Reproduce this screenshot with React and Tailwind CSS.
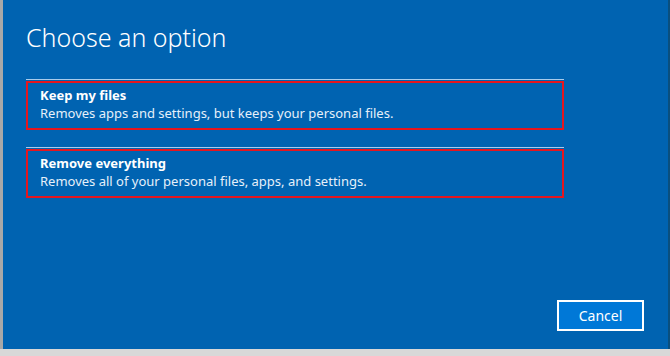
import React from 'react';

const options = [
  { title: 'Keep my files', desc: 'Removes apps and settings, but keeps your personal files.' },
  { title: 'Remove everything', desc: 'Removes all of your personal files, apps, and settings.' },
];

const OptionButton = ({ title, desc }) => (
  <div className="w-[538px] border-t border-[#a9cbeb] pt-px">
    <div className="h-[49px] border-2 border-[#e5161f] pl-[12px] pt-[3px]">
      <p className="text-[13px] font-bold leading-[18px] text-white">{title}</p>
      <p className="text-[13px] leading-[18px] text-[#e6f0fa]">{desc}</p>
    </div>
  </div>
);

const App = () => {
  return (
    <div
      className="w-[670px] h-[356px] flex flex-col overflow-hidden bg-[#9c9c9c]"
      style={{ fontFamily: '"Noto Sans", "Open Sans", sans-serif' }}
    >
      <div className="flex flex-1">
        {/* left edge of desktop behind */}
        <div className="w-[3px] bg-[#a8a8a8]" />

        {/* dialog */}
        <div className="flex-1 bg-[#0063b1] pl-[23px] pr-[24px] flex flex-col">
          <h1 className="mt-[20px] text-[25px] font-light leading-[34px] text-white">Choose an option</h1>

          <div className="mt-[25px] flex flex-col gap-[17px]">
            {options.map((o) => (
              <OptionButton key={o.title} title={o.title} desc={o.desc} />
            ))}
          </div>

          <div className="mt-auto mb-[18px] flex justify-end">
            <button className="w-[87px] h-[31px] border-2 border-white bg-[#0078d7] text-[14px] text-white">
              Cancel
            </button>
          </div>
        </div>

        <div className="w-[2px] bg-[#0a4f7e]" />
      </div>

      {/* strip of window behind */}
      <div className="h-[7px] bg-[#d8d8d8]" />
    </div>
  );
};

export default App;
